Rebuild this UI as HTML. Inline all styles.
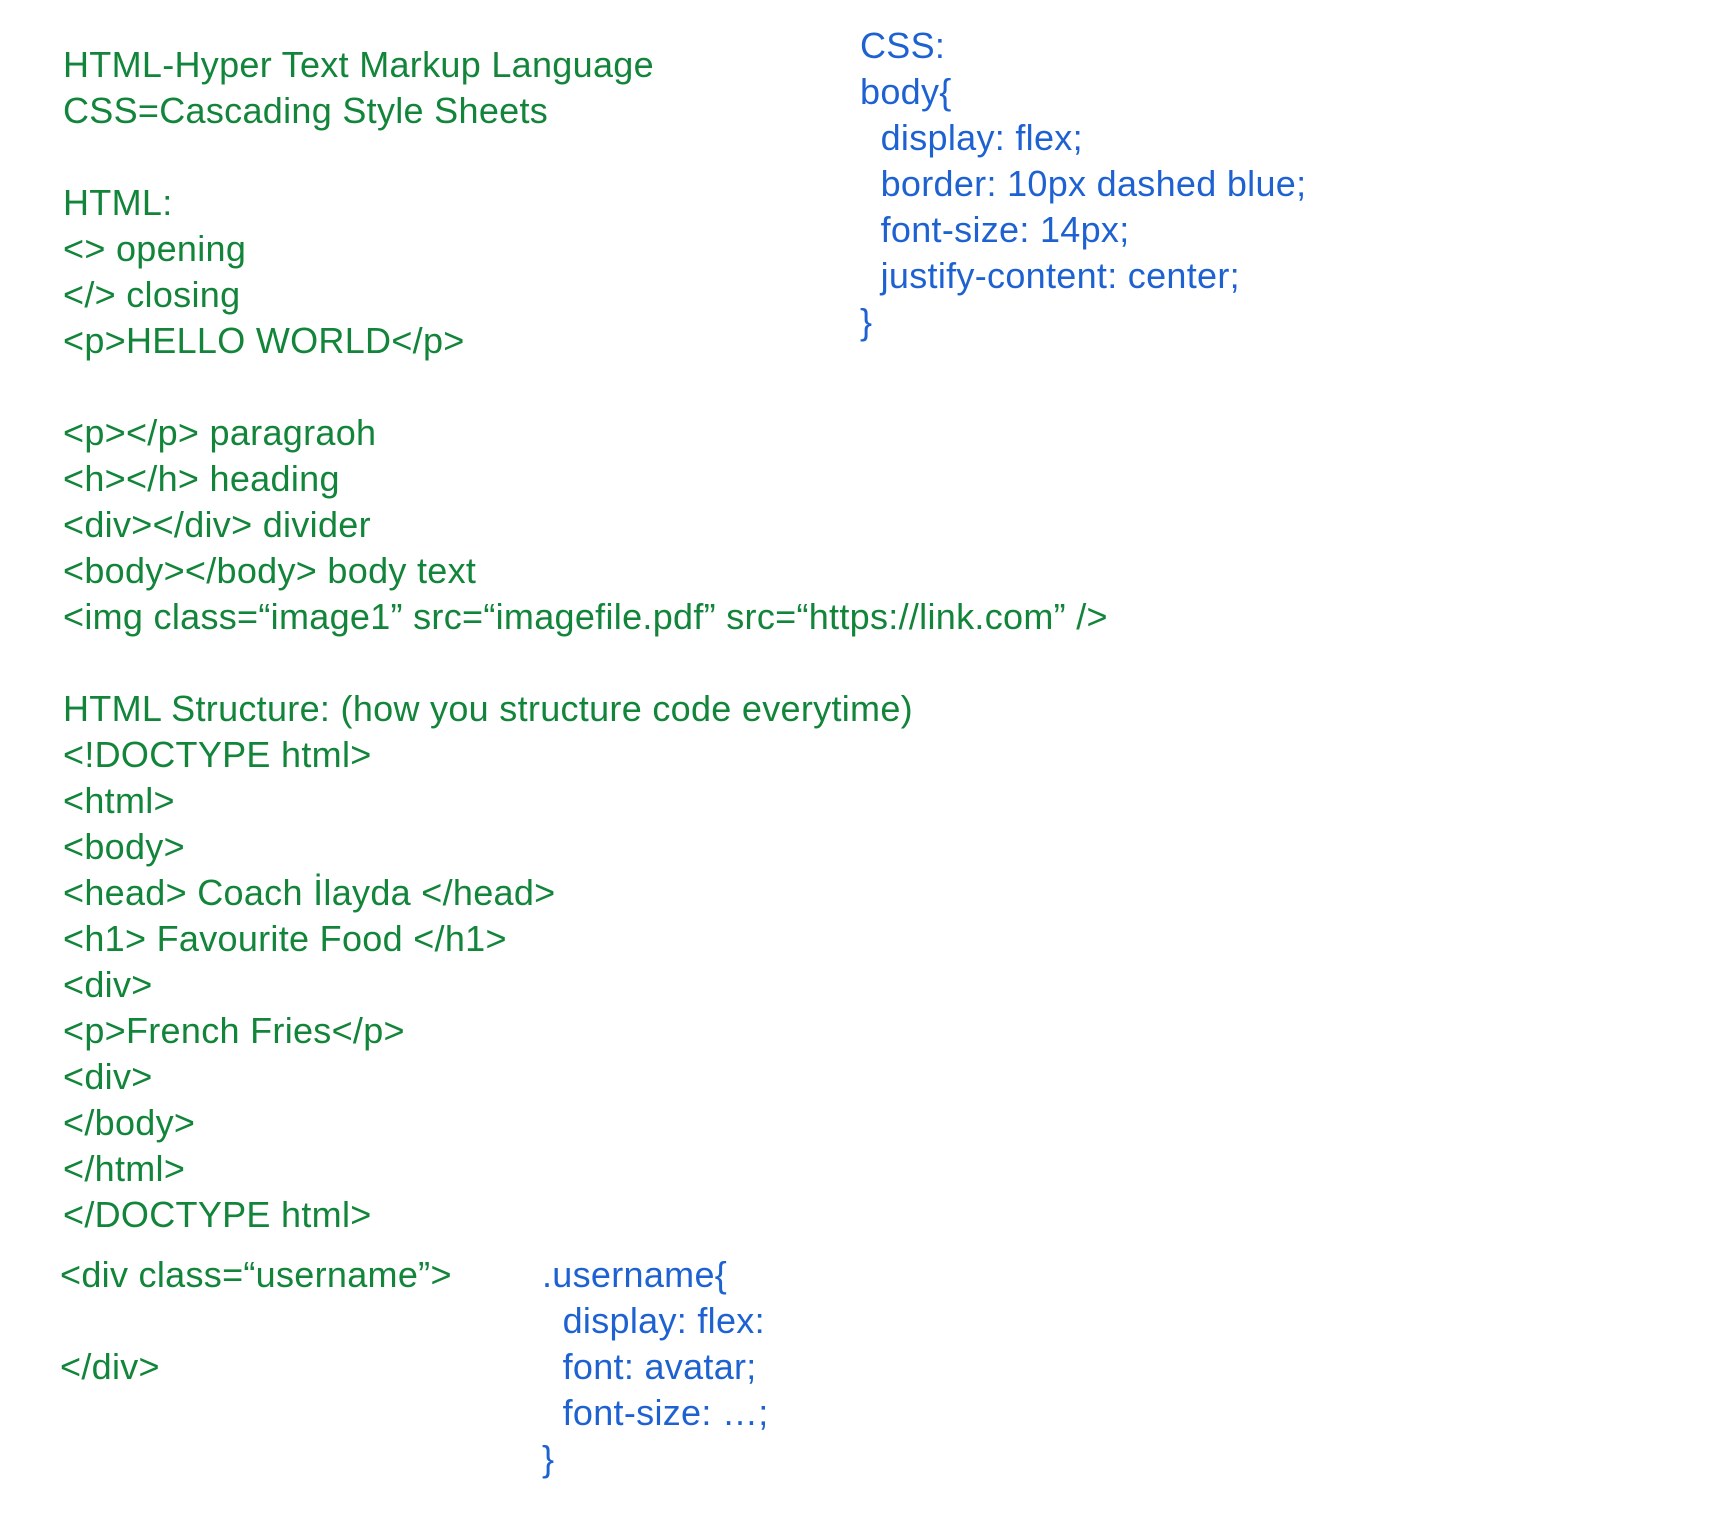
<!DOCTYPE html>
<html><head><meta charset="utf-8"><style>
html,body{margin:0;padding:0;background:#fff;width:1730px;height:1534px;overflow:hidden}
pre{position:absolute;margin:0;font-family:"Liberation Sans",Arial,sans-serif;font-size:36px;line-height:46px;white-space:pre;letter-spacing:0.3px}
.g{color:#12853a}
.b{color:#1e62d2}
</style></head><body>
<pre class="g" style="left:63px;top:42px">HTML-Hyper Text Markup Language
CSS=Cascading Style Sheets

HTML:
&lt;&gt; opening
&lt;/&gt; closing
&lt;p&gt;HELLO WORLD&lt;/p&gt;

&lt;p&gt;&lt;/p&gt; paragraoh
&lt;h&gt;&lt;/h&gt; heading
&lt;div&gt;&lt;/div&gt; divider
&lt;body&gt;&lt;/body&gt; body text
&lt;img class=“image1” src=“imagefile.pdf” src=“https://link.com” /&gt;

HTML Structure: (how you structure code everytime)
&lt;!DOCTYPE html&gt;
&lt;html&gt;
&lt;body&gt;
&lt;head&gt; Coach İlayda &lt;/head&gt;
&lt;h1&gt; Favourite Food &lt;/h1&gt;
&lt;div&gt;
&lt;p&gt;French Fries&lt;/p&gt;
&lt;div&gt;
&lt;/body&gt;
&lt;/html&gt;
&lt;/DOCTYPE html&gt;</pre>
<pre class="b" style="left:860px;top:23px">CSS:
body{
  display: flex;
  border: 10px dashed blue;
  font-size: 14px;
  justify-content: center;
}</pre>
<pre class="g" style="left:60px;top:1252px">&lt;div class=“username”&gt;

&lt;/div&gt;</pre>
<pre class="b" style="left:542px;top:1252px">.username{
  display: flex:
  font: avatar;
  font-size: …;
}</pre>
</body></html>
